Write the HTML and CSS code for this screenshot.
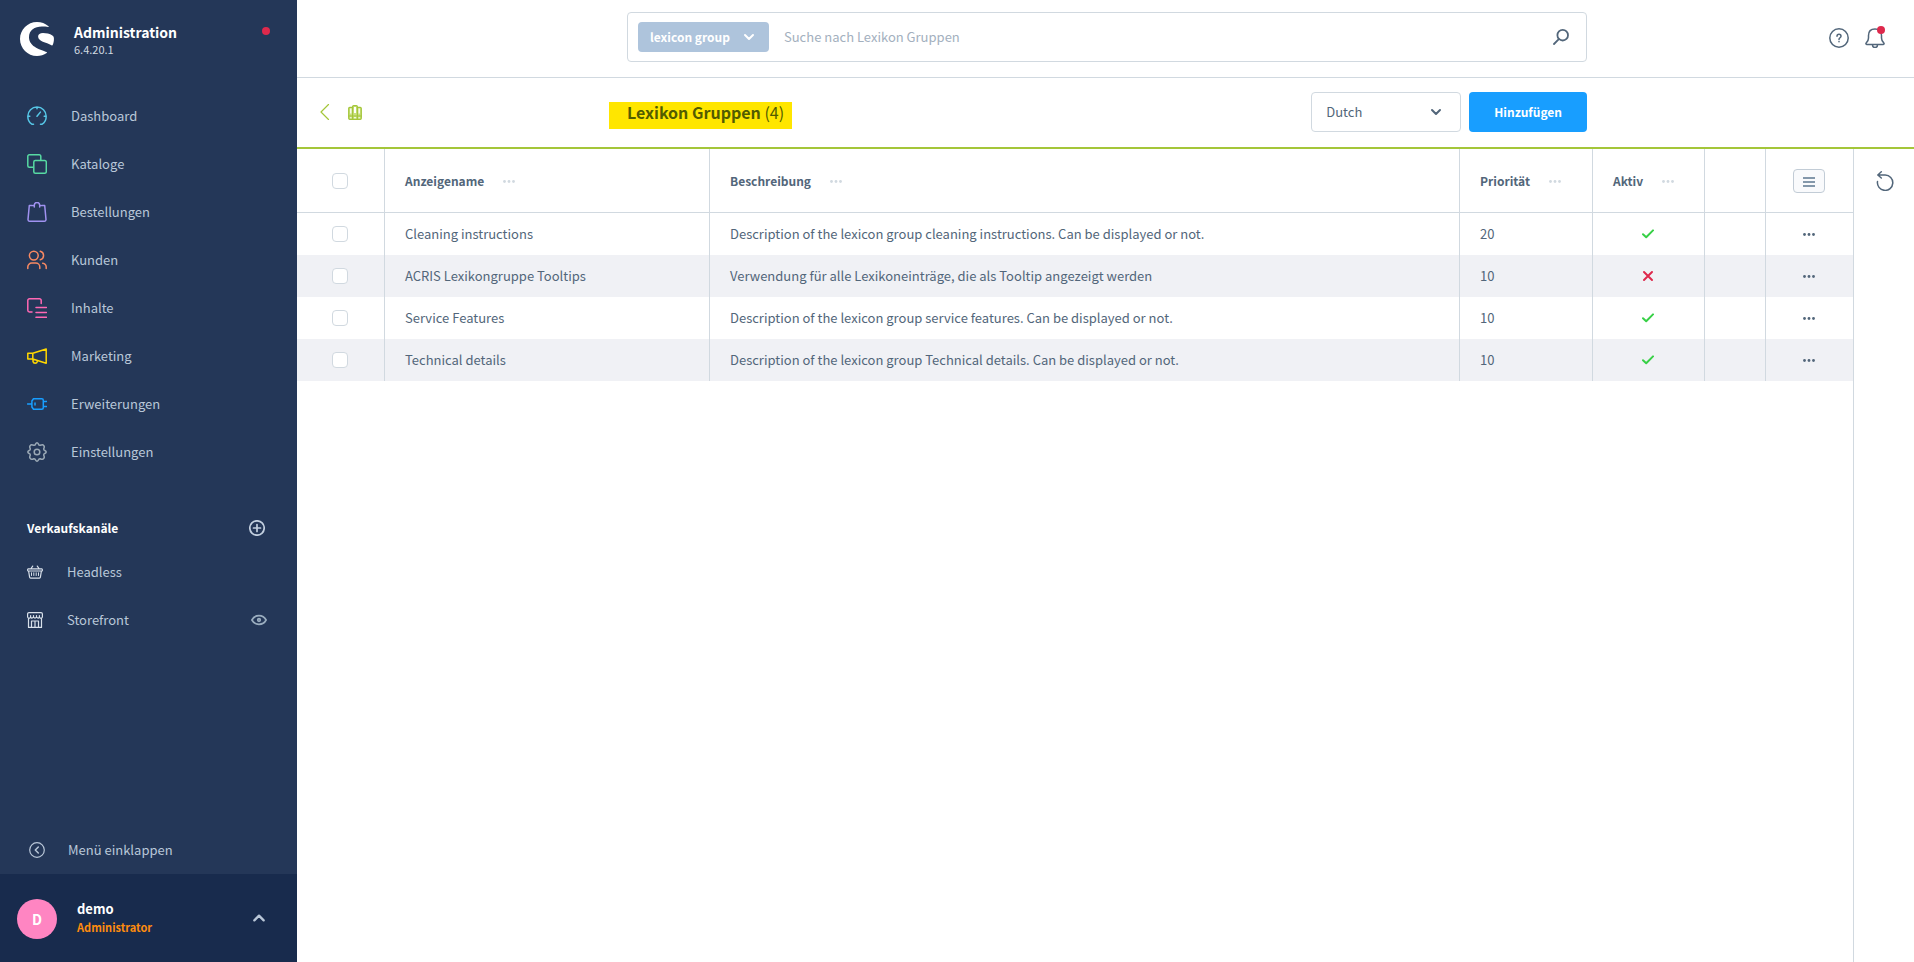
FILE: index.html
```html
<!DOCTYPE html>
<html lang="de">
<head>
<meta charset="utf-8">
<title>Lexikon Gruppen | Administration</title>
<link rel="stylesheet" href="styles.css">
</head>
<body>
<svg class="sprite" aria-hidden="true">
  <symbol id="i-dots" viewBox="0 0 12 12"><g fill="currentColor"><circle cx="1.5" cy="6.500" r="1.400"/><circle cx="6" cy="6.500" r="1.400"/><circle cx="10.5" cy="6.500" r="1.400"/></g></symbol>
  <symbol id="i-check" viewBox="0 0 12 12"><path d="M1 6.2 4.2 9.2 11 2.4" fill="none" stroke="currentColor" stroke-width="2" stroke-linecap="round" stroke-linejoin="round"/></symbol>
  <symbol id="i-cross" viewBox="0 0 12 12"><path d="M2 2l8 8M10 2l-8 8" fill="none" stroke="currentColor" stroke-width="2" stroke-linecap="round"/></symbol>
  <symbol id="i-down" viewBox="0 0 12 12"><path d="M2 4l4 4 4-4" fill="none" stroke="currentColor" stroke-width="2" stroke-linecap="round" stroke-linejoin="round"/></symbol>
</svg>
<div class="app">
  <aside class="sidebar">
    <header class="brand">
      <svg class="logo" viewBox="0 0 34 34" fill="#fff"><path d="M28.500 4.300C25.400 1.500 21.300 0 17 0 7.600 0 0 7.600 0 17s7.600 17 17 17c3.500 0 6.900-1.100 9.700-3 .4-.3.300-.7-.1-.9C22.300 27.800 9 25.500 9 15.200 9 8.500 14.500 4.600 22 4.600c2.500 0 4.400.2 6.300.4.500 0 .600-.4.200-.7z"/><path d="M33.800 15.500c-.2-1-.6-1.600-1.400-2.100C29.800 11.700 26.200 11 23 11c-3 0-4.900 1.300-4.900 3.600 0 4.900 8.200 5.900 13.400 8.700.6.300 1 .2 1.200-.3.900-2.200 1.500-4.800 1.100-7.500z"/></svg>
      <div class="brand-text">
        <span class="brand-name">Administration</span>
        <span class="brand-version">6.4.20.1</span>
      </div>
      <span class="status-dot"></span>
    </header>
    <nav class="menu">
      <a href="#" class="menu-item"><svg class="icon20 c-dashboard" viewBox="0 0 20 20"><path d="M6.500 18.200H4.800C2.300 16.500.8 13.700.8 10.200a9.200 9.200 0 0 1 18.400 0c0 3.500-1.500 6.300-4 8h-1.700M10 10.300l3.400-4.200M10 1v1.800M1 10.300h1.800M17.200 10.300H19"/></svg><span>Dashboard</span></a>
      <a href="#" class="menu-item"><svg class="icon20 c-catalog" viewBox="0 0 20 20"><path d="M6 13.300H2.300a1.500 1.500 0 0 1-1.500-1.500V2.300A1.500 1.500 0 0 1 2.300.8h10a1.500 1.500 0 0 1 1.500 1.500V6"/><rect x="6.800" y="6.600" width="12.500" height="12.600" rx="1.500"/></svg><span>Kataloge</span></a>
      <a href="#" class="menu-item"><svg class="icon20 c-orders" viewBox="0 0 20 20"><path d="M5 3.500H2.300L1 17.500a1.600 1.600 0 0 0 1.600 1.700h14.800a1.600 1.600 0 0 0 1.600-1.700l-1.300-14H15M7.300 5V3.200a2.700 2.700 0 0 1 5.400 0V5M6 3.500h1.300M12.700 3.500H14"/></svg><span>Bestellungen</span></a>
      <a href="#" class="menu-item"><svg class="icon20 c-customers" viewBox="0 0 20 20"><circle cx="6.800" cy="5.600" r="4.400"/><path d="M.8 18.600V17a4 4 0 0 1 4-4h4a4 4 0 0 1 4 4v1.600M13.300 1.300a4.400 4.400 0 0 1 0 8.500M15.700 13.200A4 4 0 0 1 19.200 17v1.600"/></svg><span>Kunden</span></a>
      <a href="#" class="menu-item"><svg class="icon20 c-content" viewBox="0 0 20 20"><path d="M5 14H2.500A1.700 1.700 0 0 1 .8 12.300V2.500A1.700 1.700 0 0 1 2.500.8h10a1.700 1.700 0 0 1 1.700 1.700V5.500M9 9.500h10.500M9 14.500h10.500M9 19.300h10.500"/></svg><span>Inhalte</span></a>
      <a href="#" class="menu-item"><svg class="icon20 c-marketing" viewBox="0 0 20 20"><path d="M.8 7.300h5V13h-5zM5.800 7.300 19.200 3v14.200L5.800 13M6 13v2.500a2.200 2.200 0 0 0 4.300 0v-1"/></svg><span>Marketing</span></a>
      <a href="#" class="menu-item"><svg class="icon20 c-extensions" viewBox="0 0 20 20"><path d="M.5 10h4.300M6.500 4.700h8.300a1.500 1.500 0 0 1 1.500 1.500v7.600a1.500 1.500 0 0 1-1.500 1.500H6.500L4.900 13V7zM16.300 7.400h3.200M16.300 12.600h3.200M8 9v2"/></svg><span>Erweiterungen</span></a>
      <a href="#" class="menu-item"><svg class="icon20 c-settings" viewBox="0 0 20 20"><circle cx="10" cy="10" r="2.800"/><path d="M8.500 2.200Q10-.6 11.500 2.200 11.900 3.500 13.200 3.300 15.900 2 16.500 3.500 18 4.100 16.700 6.800 16.500 8.100 17.800 8.500 20.600 10 17.800 11.500 16.500 11.900 16.700 13.200 18 15.900 16.500 16.500 15.900 18 13.200 16.700 11.900 16.500 11.500 17.800 10 20.600 8.500 17.800 8.100 16.500 6.800 16.700 4.100 18 3.500 16.500 2 15.900 3.300 13.200 3.500 11.900 2.200 11.500-.6 10 2.200 8.500 3.500 8.100 3.300 6.800 2 4.100 3.500 3.500 4.100 2 6.800 3.300 8.100 3.500 8.500 2.200z"/></svg><span>Einstellungen</span></a>
    </nav>
    <section class="channels">
      <div class="channels-head">
        <h2>Verkaufskanäle</h2>
        <button class="plain" aria-label="Verkaufskanal hinzufügen"><svg class="icon16" viewBox="0 0 16 16" stroke-width="1.700"><circle cx="8" cy="8" r="7.200"/><path d="M8 4.500v7M4.500 8h7"/></svg></button>
      </div>
      <a href="#" class="channel"><svg class="icon16 light" viewBox="0 0 16 16" stroke-width="1.200"><path d="M1.200 4.800h13.600c.8 0 .8 2.200 0 2.200H1.200c-.8 0-.8-2.200 0-2.200zM1.600 7l1 6.200c.1.600.5.900 1 .9h8.800c.5 0 .9-.3 1-.9l1-6.200M4 4.500l1.700-2.400M12 4.500l-1.700-2.400"/><path d="M4.500 8.800v2.700M6.800 8.800v2.700M9.200 8.800v2.700M11.500 8.800v2.700" stroke-width="1"/></svg><span>Headless</span></a>
      <a href="#" class="channel"><svg class="icon16 light" viewBox="0 0 16 16" stroke-width="1.200"><path d="M1.500 7v8.400h13V7M.6 5V2A1.400 1.400 0 0 1 2 .6h12A1.400 1.400 0 0 1 15.400 2v3M.6 5q1.200 2.500 3 .2 1.200 1.800 2.900 0 1.500 1.800 3 0 1.700 1.800 2.900 0 1.800 2.300 3-.2M3.600 3.500v1.700M6.500 3.500v1.700M9.500 3.500v1.700M12.400 3.500v1.700M4.500 15V9h7v6M8 9v6"/></svg><span>Storefront</span><svg class="icon16 eye" viewBox="0 0 16 16" stroke-width="1.700"><path d="M.9 8C2.500 5 5 3.700 8 3.700S13.500 5 15.100 8C13.500 11 11 12.300 8 12.300S2.500 11 .9 8z"/><circle cx="8" cy="8" r="1.300"/></svg></a>
    </section>
    <button class="collapse"><svg class="icon16" viewBox="0 0 16 16" stroke-width="1.200"><circle cx="8" cy="8" r="7.300"/><path d="M9.300 5 6.300 8l3 3" stroke-width="1.500"/></svg><span>Menü einklappen</span></button>
    <button class="user">
      <span class="avatar">D</span>
      <span class="user-text"><span class="user-name">demo</span><span class="user-role">Administrator</span></span>
      <svg class="icon12" viewBox="0 0 12 12"><path d="M2 8l4-4 4 4"/></svg>
    </button>
  </aside>

  <main class="main">
    <header class="topbar">
      <div class="search">
        <button class="search-type"><span>lexicon group</span><svg class="glyph"><use href="#i-down"/></svg></button>
        <input class="search-input" type="text" placeholder="Suche nach Lexikon Gruppen" aria-label="Suche">
        <button class="plain slate" aria-label="Suchen"><svg class="icon16" viewBox="0 0 16 16" stroke-width="1.800"><circle cx="9.700" cy="6.200" r="5.300"/><path d="M5.800 10.200 1 15"/></svg></button>
      </div>
      <div class="top-actions">
        <button class="plain slate" aria-label="Hilfe"><svg class="icon20" viewBox="0 0 20 20"><circle cx="10" cy="10" r="9.200"/><path d="M8 8.200C8 5.700 12 5.700 12 8.200 12 9.700 10 9.800 10 11.400M10 13.400v.4"/></svg></button>
        <button class="plain slate bell" aria-label="Benachrichtigungen"><svg class="icon20" viewBox="0 0 20 20"><path d="M2 16.500h16c1 0 1.400-.8.800-1.500-1.500-1.700-2.300-2.500-2.300-5V7.500C16.500 3.500 14 1 10 1S3.500 3.500 3.500 7.500V10c0 2.500-.8 3.300-2.300 5-.6.700-.2 1.500.8 1.500zM7.500 17a2.500 2.500 0 0 0 5 0"/></svg><span class="bell-dot"></span></button>
      </div>
    </header>

    <div class="smartbar">
      <div class="smartbar-left">
        <a href="#" class="back" aria-label="Zurück"><svg viewBox="0 0 16 16"><path d="M11.500 0.500 4 8l7.500 7.500"/></svg></a>
        <svg class="books" viewBox="0 0 14 15"><path fill="#c9e07f" d="M.7 3.400a1 1 0 0 1 1-1h2.900V1.700a1 1 0 0 1 1-1h2.800a1 1 0 0 1 1 1v.7h2.900a1 1 0 0 1 1 1v9.900a1 1 0 0 1-1 1H1.700a1 1 0 0 1-1-1z"/><path d="M4.600 2.400v11.900M9.400 2.400v11.900M.7 11h12.600"/><path fill="#fff" stroke="none" d="M2.200 3.500h1.200v5H2.200zM6 2h2v6H6zM10.600 3.500h1.200v5h-1.200zM2.200 12.200h1.200v1H2.200zM6 12.200h2v1H6zM10.600 12.200h1.200v1h-1.200z"/></svg>
      </div>
      <div class="smartbar-content">
        <h1>Lexikon Gruppen <span>(4)</span></h1>
        <div class="smartbar-actions">
          <div class="language">
            <select aria-label="Sprache"><option>Dutch</option></select>
            <svg class="glyph"><use href="#i-down"/></svg>
          </div>
          <button class="primary">Hinzufügen</button>
        </div>
      </div>
    </div>

    <div class="content">
      <div class="grid-area">
        <table class="grid">
          <colgroup><col class="w-check"><col class="w-name"><col><col class="w-prio"><col class="w-active"><col class="w-empty"><col class="w-actions"></colgroup>
          <thead>
            <tr>
              <th class="center"><input type="checkbox" aria-label="Alle auswählen"></th>
              <th><span class="head">Anzeigename<svg class="glyph"><use href="#i-dots"/></svg></span></th>
              <th><span class="head">Beschreibung<svg class="glyph"><use href="#i-dots"/></svg></span></th>
              <th><span class="head">Priorität<svg class="glyph"><use href="#i-dots"/></svg></span></th>
              <th><span class="head">Aktiv<svg class="glyph"><use href="#i-dots"/></svg></span></th>
              <th></th>
              <th class="center"><button class="columns" aria-label="Spalten"><svg viewBox="0 0 12 12"><path d="M0 3h12M0 7h12M0 11h12" stroke="currentColor" stroke-width="2"/></svg></button></th>
            </tr>
          </thead>
          <tbody>
            <tr>
              <td class="center"><input type="checkbox" aria-label="Cleaning instructions"></td>
              <td>Cleaning instructions</td>
              <td>Description of the lexicon group cleaning instructions. Can be displayed or not.</td>
              <td>20</td>
              <td class="center yes"><svg class="glyph"><use href="#i-check"/></svg></td>
              <td></td>
              <td class="center"><button class="plain slate" aria-label="Aktionen"><svg class="glyph"><use href="#i-dots"/></svg></button></td>
            </tr>
            <tr>
              <td class="center"><input type="checkbox" aria-label="ACRIS Lexikongruppe Tooltips"></td>
              <td>ACRIS Lexikongruppe Tooltips</td>
              <td>Verwendung für alle Lexikoneinträge, die als Tooltip angezeigt werden</td>
              <td>10</td>
              <td class="center no"><svg class="glyph"><use href="#i-cross"/></svg></td>
              <td></td>
              <td class="center"><button class="plain slate" aria-label="Aktionen"><svg class="glyph"><use href="#i-dots"/></svg></button></td>
            </tr>
            <tr>
              <td class="center"><input type="checkbox" aria-label="Service Features"></td>
              <td>Service Features</td>
              <td>Description of the lexicon group service features. Can be displayed or not.</td>
              <td>10</td>
              <td class="center yes"><svg class="glyph"><use href="#i-check"/></svg></td>
              <td></td>
              <td class="center"><button class="plain slate" aria-label="Aktionen"><svg class="glyph"><use href="#i-dots"/></svg></button></td>
            </tr>
            <tr>
              <td class="center"><input type="checkbox" aria-label="Technical details"></td>
              <td>Technical details</td>
              <td>Description of the lexicon group Technical details. Can be displayed or not.</td>
              <td>10</td>
              <td class="center yes"><svg class="glyph"><use href="#i-check"/></svg></td>
              <td></td>
              <td class="center"><button class="plain slate" aria-label="Aktionen"><svg class="glyph"><use href="#i-dots"/></svg></button></td>
            </tr>
          </tbody>
        </table>
      </div>
      <aside class="tools">
        <button class="plain slate" aria-label="Aktualisieren"><svg class="icon20" viewBox="0 0 20 20"><path d="M2.500 10.500A7.700 7.700 0 1 0 10.200 4H3M6.300.8 2.800 4l3.500 3"/></svg></button>
      </aside>
    </div>
  </main>
</div>
</body>
</html>
```
FILE: styles.css
```css
* { box-sizing: border-box; }

body {
  margin: 0;
  font-family: "Noto Sans CJK SC", "Noto Sans", sans-serif;
  font-size: 13px;
  line-height: 20px;
  color: #52667a;
  background: #fff;
}

button, input, select { font: inherit; color: inherit; }
button { cursor: pointer; }
a { color: inherit; text-decoration: none; }
svg { display: block; flex: none; }
h1, h2 { margin: 0; }

.sprite { position: absolute; width: 0; height: 0; }

.app { display: flex; min-height: 100vh; }

.icon20, .icon16, .icon12, .back svg, .books {
  fill: none;
  stroke: currentColor;
  stroke-linecap: round;
  stroke-linejoin: round;
}
.icon20 { width: 20px; height: 20px; stroke-width: 1.5; }
.icon16 { width: 16px; height: 16px; }
.icon12 { width: 14px; height: 14px; stroke-width: 2; }
.glyph { width: 12px; height: 12px; }

.plain { display: flex; padding: 0; border: 0; background: none; }
.slate { color: #52667a; }

/* Sidebar */
.sidebar {
  display: flex;
  flex-direction: column;
  flex: none;
  width: 297px;
  background: #243758;
  color: #b9c7d8;
}

.brand { display: flex; align-items: flex-start; gap: 20px; padding: 22px 27px 16px 20px; }
.logo { width: 34px; height: 34px; }
.brand-text { display: flex; flex-direction: column; flex: 1; }
.brand-name { font-size: 14px; line-height: 20px; font-weight: 700; color: #fff; }
.brand-version { font-size: 11px; line-height: 14px; color: #d1d9e0; }
.status-dot { width: 8px; height: 8px; margin-top: 5px; border-radius: 50%; background: #de294c; }

.menu { display: flex; flex-direction: column; padding-top: 20px; }
.menu-item { display: flex; align-items: center; gap: 24px; height: 48px; padding: 0 27px; }
.c-dashboard { color: #56c6e6; }
.c-catalog { color: #57d9a3; }
.c-orders { color: #a092f0; }
.c-customers { color: #f88962; }
.c-content { color: #ff68b4; }
.c-marketing { color: #ffd700; }
.c-extensions { color: #189eff; }
.c-settings { color: #9aa8b5; }

.channels { padding-top: 32px; }
.channels-head { display: flex; align-items: center; justify-content: space-between; height: 40px; padding: 0 32px 0 27px; }
.channels-head h2 { font-size: 12px; font-weight: 700; color: #fff; }
.channels-head .plain { color: #c2cfdf; }
.channel { display: flex; align-items: center; gap: 24px; height: 48px; padding: 0 30px 0 27px; }
.light { color: #d8e0ea; }
.eye { margin-left: auto; color: #9aadbf; }

.collapse {
  display: flex;
  align-items: center;
  gap: 23px;
  height: 48px;
  margin-top: auto;
  padding: 0 29px;
  border: 0;
  background: none;
}

.user {
  display: flex;
  align-items: center;
  gap: 20px;
  height: 88px;
  padding: 0 31px 0 17px;
  border: 0;
  background: #182b4d;
  text-align: left;
}
.avatar {
  width: 40px;
  margin-top: 2px;
  border-radius: 50%;
  background: #ff85c2;
  color: #fff;
  font-size: 14px;
  font-weight: 700;
  line-height: 40px;
  text-align: center;
}
.user-text { display: flex; flex-direction: column; flex: 1; font-weight: 700; line-height: 18px; }
.user-name { color: #fff; }
.user-role { font-size: 11px; color: #ff8c0d; }

/* Top bar */
.main { display: flex; flex-direction: column; flex: 1; min-width: 0; }

.topbar, .smartbar {
  display: grid;
  grid-template-columns: 1fr minmax(0, 960px) 1fr;
  align-items: center;
  padding-left: 3px;
}
.topbar { height: 78px; padding-bottom: 3px; border-bottom: 1px solid #d1d9e0; }

.search {
  grid-column: 2;
  display: flex;
  align-items: center;
  height: 50px;
  padding: 0 17px 0 10px;
  border: 1px solid #d1d9e0;
  border-radius: 4px;
}
.search-type {
  display: flex;
  align-items: center;
  gap: 13px;
  height: 30px;
  padding: 0 14px 0 12px;
  border: 0;
  border-radius: 4px;
  background: #aec4dc;
  color: #fff;
  font-size: 12px;
  font-weight: 700;
}
.search-input { flex: 1; min-width: 0; padding: 0 15px; border: 0; outline: 0; background: none; }
.search-input::placeholder { color: #a3b0be; opacity: 1; }

.top-actions { display: flex; justify-content: flex-end; gap: 16px; padding: 1px 29px 0 0; }
.bell { position: relative; }
.bell-dot { position: absolute; top: -2px; right: 0; width: 8px; height: 8px; border-radius: 50%; background: #de294c; }

/* Smart bar */
.smartbar { height: 71px; padding-bottom: 1px; border-bottom: 2px solid #a4c639; }
.smartbar-left { display: flex; align-items: center; gap: 15px; padding-left: 17px; color: #a4c639; }
.back svg { width: 16px; height: 16px; stroke-width: 1.2; }
.books { width: 14px; height: 15px; stroke-width: 1.2; }
.smartbar-content { display: flex; align-items: center; justify-content: space-between; }
.smartbar h1 {
  margin: 7px 0 0 -18px;
  padding: 0 8px 7px 18px;
  background: #ffe600;
  color: #525c00;
  font-size: 16px;
  font-weight: 700;
  line-height: 20px;
}
.smartbar h1 span { font-weight: 400; }
.smartbar-actions { display: flex; gap: 8px; }
.language { position: relative; width: 150px; }
.language select {
  width: 100%;
  height: 40px;
  padding: 0 32px 0 14px;
  border: 1px solid #d1d9e0;
  border-radius: 4px;
  background: #fff;
  appearance: none;
}
.language .glyph { position: absolute; top: 14px; right: 19px; pointer-events: none; }
.primary {
  height: 40px;
  padding: 0 25px;
  border: 0;
  border-radius: 4px;
  background: #189eff;
  color: #fff;
  font-size: 12px;
  font-weight: 700;
}

/* Data grid */
.content { display: flex; flex: 1; }
.grid-area { flex: 1; min-width: 0; }
.grid { width: 100%; table-layout: fixed; border-collapse: separate; border-spacing: 0; }
.w-check { width: 88px; }
.w-name { width: 325px; }
.w-prio { width: 133px; }
.w-active { width: 112px; }
.w-empty { width: 61px; }
.w-actions { width: 87px; }

.grid th, .grid td { padding: 0 20px; border-right: 1px solid #d1d9e0; text-align: left; }
.grid th { height: 64px; border-bottom: 1px solid #d1d9e0; font-size: 12px; font-weight: 700; }
.grid td { height: 42px; }
.grid th:last-child, .grid td:last-child { border-right: 0; }
.grid .center { padding: 0 1px 0 0; }
.grid .center > * { margin: 0 auto; }
.grid tbody tr:nth-child(even) { background: #f0f1f5; }
.head { display: flex; align-items: center; gap: 19px; }
.head .glyph { color: #d1d9e0; }
.yes { color: #37d046; }
.no { color: #de294c; }

.grid input {
  display: block;
  width: 16px;
  height: 16px;
  border: 1px solid #d1d9e0;
  border-radius: 4px;
  background: #fff;
  appearance: none;
}

.columns {
  display: flex;
  align-items: center;
  justify-content: center;
  width: 32px;
  height: 24px;
  padding: 0;
  border: 1px solid #c2ccd6;
  border-radius: 4px;
  background: #f9fafc;
  color: #8498ab;
}
.columns svg { width: 12px; height: 12px; }

.tools { display: flex; flex-direction: column; align-items: center; width: 61px; padding: 22px 0 0 2px; border-left: 1px solid #d1d9e0; }
```
